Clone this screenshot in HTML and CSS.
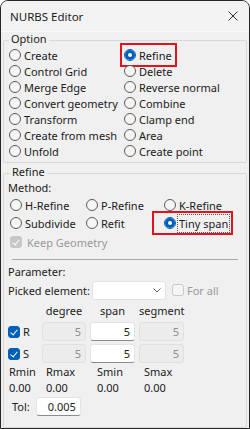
FILE: index.html
```html
<!DOCTYPE html>
<html lang="en">
<head>
  <meta charset="UTF-8">
  <title>NURBS Editor</title>
  <link rel="stylesheet" href="styles.css">
</head>
<body>
  <div class="window">
    <div class="titlebar">
      <span>NURBS Editor</span>
      <svg class="close" width="10" height="10" viewBox="0 0 10 10">
        <path d="M0.5 0.5 L9.5 9.5 M9.5 0.5 L0.5 9.5" stroke="#333" stroke-width="1"/>
      </svg>
    </div>

    <!-- Option -->
    <fieldset class="group option">
      <legend>Option</legend>
      <div class="option-grid">
        <label class="radio"><i class="mark"></i>Create</label>
        <label class="radio on boxed"><i class="mark"></i>Refine</label>
        <label class="radio"><i class="mark"></i>Control Grid</label>
        <label class="radio"><i class="mark"></i>Delete</label>
        <label class="radio"><i class="mark"></i>Merge Edge</label>
        <label class="radio"><i class="mark"></i>Reverse normal</label>
        <label class="radio"><i class="mark"></i>Convert geometry</label>
        <label class="radio"><i class="mark"></i>Combine</label>
        <label class="radio"><i class="mark"></i>Transform</label>
        <label class="radio"><i class="mark"></i>Clamp end</label>
        <label class="radio"><i class="mark"></i>Create from mesh</label>
        <label class="radio"><i class="mark"></i>Area</label>
        <label class="radio"><i class="mark"></i>Unfold</label>
        <label class="radio"><i class="mark"></i>Create point</label>
      </div>
    </fieldset>

    <!-- Refine -->
    <fieldset class="group refine">
      <legend>Refine</legend>
      <div class="line method">Method:</div>
      <div class="method-grid">
        <label class="radio"><i class="mark"></i>H-Refine</label>
        <label class="radio"><i class="mark"></i>P-Refine</label>
        <label class="radio"><i class="mark"></i>K-Refine</label>
        <label class="radio"><i class="mark"></i>Subdivide</label>
        <label class="radio"><i class="mark"></i>Refit</label>
        <label class="radio on boxed wide"><i class="mark"></i><span class="focus">Tiny span</span></label>
      </div>
      <label class="check disabled keep"><i class="box on"></i>Keep Geometry</label>
      <div class="sep"></div>

      <div class="line">Parameter:</div>
      <div class="picked">
        <span>Picked element:</span>
        <div class="combo">
          <svg width="8" height="5" viewBox="0 0 8 5"><path d="M0.5 0.5 L4 4 L7.5 0.5" fill="none" stroke="#666" stroke-width="1"/></svg>
        </div>
        <label class="check disabled"><i class="box"></i>For all</label>
      </div>

      <div class="param-grid">
        <span></span>
        <span class="head">degree</span>
        <span class="head">span</span>
        <span class="head">segment</span>

        <label class="check"><i class="box on"></i>R</label>
        <span class="field off">5</span>
        <span class="field">5</span>
        <span class="field off">5</span>

        <label class="check"><i class="box on"></i>S</label>
        <span class="field off">5</span>
        <span class="field">5</span>
        <span class="field off">5</span>
      </div>

      <div class="range-grid">
        <span>Rmin</span><span>Rmax</span><span>Smin</span><span>Smax</span>
        <span>0.00</span><span>0.00</span><span>0.00</span><span>0.00</span>
      </div>

      <div class="tol">
        <span>Tol:</span>
        <span class="field">0.005</span>
      </div>
    </fieldset>
  </div>
</body>
</html>
```

FILE: styles.css
```css
* {
  box-sizing: border-box;
}

body {
  margin: 0;
  font-family: "Noto Sans", "Segoe UI", sans-serif;
  font-size: 11px;
  color: #1b1b1b;
}

.window {
  width: 250px;
  height: 429px;
  border: 1px solid #262626;
  border-radius: 8px 8px 0 0;
  background: #f0f0f0;
  overflow: hidden;
}

.titlebar {
  height: 31px;
  display: flex;
  align-items: center;
  justify-content: space-between;
  padding: 0 11px 0 9px;
  background: #f3f3f3;
  border-bottom: 1px solid #fafafa;
  font-size: 11.5px;
}

.group {
  margin: 1px 2px 0 2px;
  border: 1px solid #d8d8d8;
  border-radius: 2px;
  padding: 0 4px 3px 5px;
  min-width: 0;
}

.group legend {
  padding: 0 2px 2px 2px;
  line-height: 12px;
}

.option-grid {
  display: grid;
  grid-template-columns: 115px 1fr;
}

.radio,
.check {
  display: flex;
  align-items: center;
  gap: 3px;
  height: 16px;
  white-space: nowrap;
}

.mark {
  width: 12px;
  height: 12px;
  flex: none;
  border: 1px solid #5c5c5c;
  border-radius: 50%;
  background: #f5f5f5;
}

.radio.on .mark {
  border-color: #005fb8;
  background: #fff;
  box-shadow: inset 0 0 0 3px #005fb8;
}

.boxed {
  width: max-content;
  outline: 2px solid #e3131c;
  outline-offset: 2px;
  padding-right: 1px;
}

.refine {
  margin-top: 3px;
  padding-left: 4px;
  height: 262px;
}

.refine legend {
  margin-left: 2px;
}

.line {
  height: 16px;
  line-height: 16px;
}

.method-grid {
  display: grid;
  grid-template-columns: 76px 78px 1fr;
  margin-left: 2px;
}

.method-grid .radio {
  height: 18px;
}

.method-grid .wide {
  outline-offset: 1px;
  margin-left: -9px;
  padding-left: 9px;
  padding-right: 2px;
}

.focus {
  outline: 1px dotted #555;
  outline-offset: 1px;
}

.box {
  width: 12px;
  height: 12px;
  flex: none;
  border: 1px solid #a8a8a8;
  border-radius: 3px;
  background: #f5f5f5;
  position: relative;
}

.box.on {
  border-color: #005fb8;
  background: #005fb8;
}

.box.on::after {
  content: "";
  position: absolute;
  left: 3px;
  top: 1px;
  width: 3px;
  height: 6px;
  border: solid #fff;
  border-width: 0 1.5px 1.5px 0;
  transform: rotate(40deg);
}

.check.disabled {
  color: #9a9a9a;
}

.check.disabled .box {
  border-color: #c8c8c8;
}

.check.disabled .box.on {
  background: #c6c6c6;
  border-color: #c6c6c6;
}

.keep {
  margin: 2px 0 0 2px;
  gap: 5px;
}

.sep {
  margin: 9px 4px 4px 4px;
  border-top: 1px solid #a9a9a9;
}

.picked {
  display: flex;
  align-items: center;
  height: 20px;
}

.combo {
  width: 74px;
  height: 19px;
  margin-left: 2px;
  margin-right: 6px;
  background: #fff;
  border: 1px solid #e2e2e2;
  border-radius: 3px;
  display: flex;
  align-items: center;
  justify-content: flex-end;
  padding-right: 4px;
}

.param-grid {
  display: grid;
  grid-template-columns: 30px 44px 45px 45px;
  grid-template-rows: 16px 19px 19px;
  column-gap: 4px;
  row-gap: 3px;
  margin-top: 3px;
}

.param-grid .check {
  height: 19px;
}

.head {
  text-align: center;
  line-height: 16px;
}

.field {
  height: 19px;
  line-height: 17px;
  text-align: right;
  padding-right: 4px;
  background: #fff;
  border: 1px solid #e4e4e4;
  border-bottom-color: #8c8c8c;
  border-radius: 3px;
}

.field.off {
  background: #ececec;
  border-color: #e0e0e0;
  color: #8e8e8e;
}

.range-grid {
  display: grid;
  grid-template-columns: 37px 51px 47px auto;
  grid-auto-rows: 16px;
  line-height: 16px;
  margin: 1px 0 0 1px;
}

.tol {
  display: flex;
  align-items: center;
  gap: 6px;
  margin: 1px 0 0 4px;
  height: 19px;
}

.tol .field {
  width: 45px;
}
```
